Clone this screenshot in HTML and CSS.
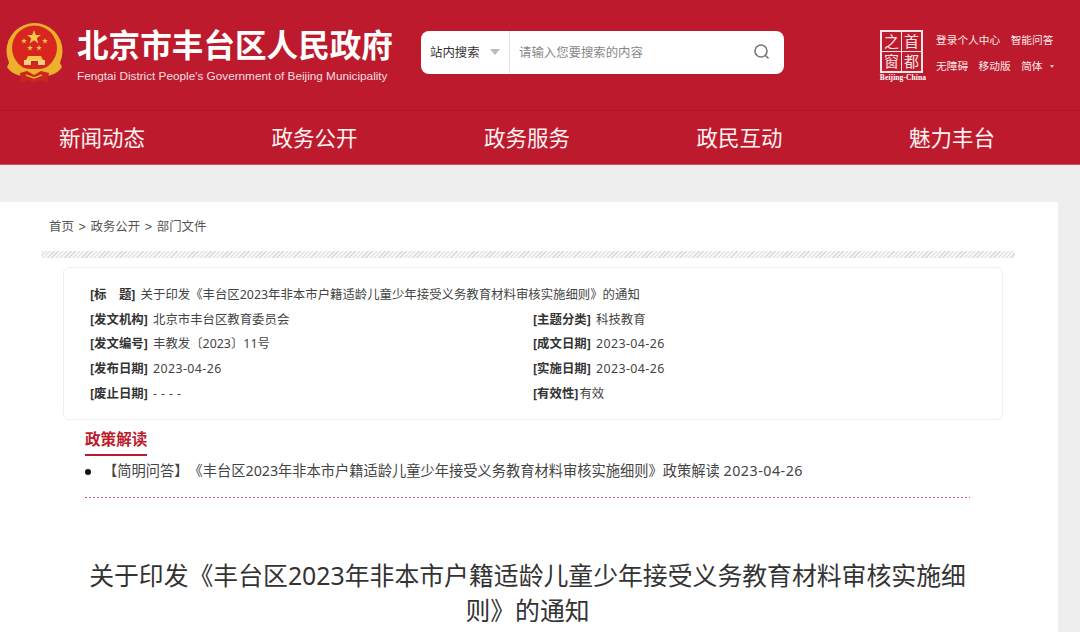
FILE: index.html
```html
<!DOCTYPE html>
<html>
<head>
    <meta charset="UTF-8">
    <title>北京市丰台区人民政府</title>
    <link rel="stylesheet" href="styles.css">
</head>
<body>
    <div class="header">
        <div class="logo">
            <svg class="emblem" width="58" height="62" viewBox="0 0 58 62">
                <defs>
                    <polygon id="star" points="0,-3 0.700,-1 2.900,-0.900 1.100,0.400 1.800,2.400 0,1.200 -1.800,2.400 -1.100,0.400 -2.900,-0.900 -0.700,-1"/>
                </defs>
                <circle cx="28.500" cy="28" r="28" fill="#ecb02c"/>
                <circle cx="28.500" cy="25" r="22.500" fill="#d8261f"/>
                <polygon points="28,7 29.800,12 35,12 30.800,15.200 32.400,20.500 28,17.300 23.600,20.500 25.200,15.200 21,12 26.200,12" fill="#f4c84a"/>
                <use href="#star" x="18" y="18" fill="#f4c84a"/>
                <use href="#star" x="39" y="18" fill="#f4c84a"/>
                <use href="#star" x="24" y="25" fill="#f4c84a"/>
                <use href="#star" x="33" y="25" fill="#f4c84a"/>
                <path d="M22 33h13l2 4H20z" fill="#f4c84a"/>
                <path d="M18 37h21v5H18z" fill="#f0d080"/>
                <path d="M25 38h7v4h-7z" fill="#c9271d"/>
                <path d="M4 38c6 7 14 8 24.500 8S47 45 53 38l3 6c-5 8-15 10-27.500 10S6 52 1 44z" fill="#ecb02c"/>
                <path d="M14 50l7-2 7 4 7-4 8 2-2 10-6-3-7 3-7-3-6 3z" fill="#c9271d"/>
                <path d="M20 52l8 3 8-3" stroke="#ecb02c" stroke-width="1.500" fill="none"/>
            </svg>
            <div class="logo-text">
                <div class="site-name">北京市丰台区人民政府</div>
                <div class="site-en">Fengtai District People's Government of Beijing Municipality</div>
            </div>
        </div>
        <div class="search">
            <div class="search-type">站内搜索<span class="caret"></span></div>
            <div class="search-input">请输入您要搜索的内容</div>
            <svg class="search-icon" width="18" height="18" viewBox="0 0 18 18" fill="none" stroke="#777" stroke-width="1.600">
                <circle cx="8" cy="8" r="6"/>
                <path d="M12.500 12.500L15.500 15.500"/>
            </svg>
        </div>
        <div class="header-right">
            <div class="capital">
                <div class="seal">
                    <span>之</span><span>首</span><span>窗</span><span>都</span>
                </div>
                <div class="seal-en">Beijing-China</div>
            </div>
            <div class="links">
                <div class="link-row"><span>登录个人中心</span><span>智能问答</span></div>
                <div class="link-row"><span>无障碍</span><span>移动版</span><span>简体<i class="mini-caret"></i></span></div>
            </div>
        </div>
    </div>

    <div class="nav">
        <span>新闻动态</span>
        <span>政务公开</span>
        <span>政务服务</span>
        <span>政民互动</span>
        <span>魅力丰台</span>
    </div>

    <div class="content">
        <div class="crumbs">首页 &gt; 政务公开 &gt; 部门文件</div>
        <div class="hatch"></div>

        <div class="meta">
            <div class="meta-row meta-full"><b>[标　题]</b> 关于印发《丰台区2023年非本市户籍适龄儿童少年接受义务教育材料审核实施细则》的通知</div>
            <div class="meta-row"><b>[发文机构]</b> 北京市丰台区教育委员会</div>
            <div class="meta-row"><b>[主题分类]</b> 科技教育</div>
            <div class="meta-row"><b>[发文编号]</b> 丰教发〔2023〕11号</div>
            <div class="meta-row"><b>[成文日期]</b> <span class="num">2023-04-26</span></div>
            <div class="meta-row"><b>[发布日期]</b> <span class="num">2023-04-26</span></div>
            <div class="meta-row"><b>[实施日期]</b> <span class="num">2023-04-26</span></div>
            <div class="meta-row"><b>[废止日期]</b> <span class="num">- - - -</span></div>
            <div class="meta-row"><b class="tight">[有效性]</b>有效</div>
        </div>

        <div class="policy">
            <h3>政策解读</h3>
            <ul>
                <li>【简明问答】《丰台区2023年非本市户籍适龄儿童少年接受义务教育材料审核实施细则》政策解读 <span class="num">2023-04-26</span></li>
            </ul>
        </div>
        <div class="rule"></div>

        <h1 class="doc-title">关于印发《丰台区2023年非本市户籍适龄儿童少年接受义务教育材料审核实施细则》的通知</h1>
    </div>
</body>
</html>
```

FILE: styles.css
```css
* {
    margin: 0;
    padding: 0;
    box-sizing: border-box;
    font-family: "Liberation Sans", "Noto Sans CJK SC", sans-serif;
}

html, body {
    height: 632px;
    overflow: hidden;
}

body {
    background: #eeeeee;
}

.header {
    background: #bd1b2d;
    height: 110px;
    display: flex;
    align-items: flex-start;
    color: white;
}

.logo {
    width: 421px;
    display: flex;
    padding: 23px 0 0 6px;
}

.emblem {
    flex: none;
    margin-right: 13px;
}

.logo-text {
    padding-top: 4px;
}

.site-name {
    font-size: 31.600px;
    line-height: 38px;
    font-weight: bold;
    white-space: nowrap;
}

.site-en {
    font-size: 11.750px;
    line-height: 16px;
    margin-top: 3px;
    white-space: nowrap;
    color: #f6dfe2;
}

.search {
    margin-top: 31px;
    width: 363px;
    height: 43px;
    background: white;
    border-radius: 8px;
    display: flex;
    align-items: center;
    font-size: 12.400px;
    padding-bottom: 1px;
}

.search-type {
    width: 89px;
    height: 100%;
    border-right: 1px solid #e8e0e0;
    display: flex;
    align-items: center;
    padding-left: 9px;
    color: #333;
}

.caret {
    margin-left: 10px;
    border-left: 5.500px solid transparent;
    border-right: 5.500px solid transparent;
    border-top: 6px solid #bbbbbb;
}

.search-input {
    flex: 1;
    padding-left: 9px;
    color: #888;
}

.search-icon {
    margin-right: 13px;
}

.header-right {
    display: flex;
    margin-left: 95px;
    padding-top: 30px;
}

.capital {
    width: 48px;
    margin-right: 9px;
}

.seal {
    width: 43px;
    height: 43px;
    margin-left: 1px;
    border: 2px solid #f6e6e6;
    display: grid;
    grid-template-columns: 1fr 1fr;
    grid-template-rows: 1fr 1fr;
    gap: 1px;
    background: #f6e6e6;
}

.seal span {
    background: #bd1b2d;
    font-size: 15px;
    line-height: 19px;
    text-align: center;
    overflow: hidden;
    color: #f8e2e2;
}

.seal-en {
    font-family: "Liberation Serif", serif;
    font-size: 7.500px;
    line-height: 9px;
    font-weight: bold;
    white-space: nowrap;
    text-align: center;
    letter-spacing: 0.100px;
}

.links {
    font-size: 10.700px;
    color: #fbeaea;
}

.link-row {
    display: flex;
    gap: 10.500px;
    line-height: 14px;
    margin-bottom: 9px;
    padding-top: 3px;
    white-space: nowrap;
}

.link-row span {
    display: flex;
    align-items: center;
}

.mini-caret {
    margin-left: 7px;
    border-left: 2px solid transparent;
    border-right: 2px solid transparent;
    border-top: 3px solid #f0c8c8;
}

.nav {
    background: #bd1b2d;
    border-top: 1px solid #b01828;
    border-bottom: 1px solid #c9505d;
    height: 55px;
    padding-top: 1px;
    display: grid;
    grid-template-columns: repeat(5, 204px);
    column-gap: 8.500px;
    color: #fdf2f2;
    font-size: 21.500px;
    line-height: 54px;
    text-align: center;
}

.content {
    background: white;
    width: 1058px;
    margin-top: 37px;
    height: 430px;
    overflow: hidden;
}

.crumbs {
    font-size: 12.400px;
    line-height: 16px;
    color: #555;
    padding: 17px 0 0 49px;
    word-spacing: 1.300px;
}

.hatch {
    margin: 16px 0 0 41px;
    width: 974px;
    height: 7px;
    background: repeating-linear-gradient(135deg, #dcdcdc 0, #dcdcdc 1px, #f6f6f6 1px, #f6f6f6 3px);
}

.meta {
    margin: 9px 0 0 63px;
    width: 940px;
    height: 153px;
    border: 1px solid #eeeeee;
    border-radius: 6px;
    padding: 14px 0 0 26px;
    display: grid;
    grid-template-columns: 443px 1fr;
    grid-auto-rows: 24.700px;
    font-family: "Noto Sans", "Noto Sans CJK SC", sans-serif;
    font-size: 12.400px;
    line-height: 25px;
    color: #444;
}

.meta b {
    font-family: inherit;
    color: #333;
    margin-right: 2px;
}

.meta b.tight {
    margin-right: 1px;
}

.meta-row {
    font-family: inherit;
}

.meta-full {
    grid-column: 1 / 3;
}

.num {
    font-family: "Noto Sans", sans-serif;
    letter-spacing: 0.400px;
}

.policy {
    margin: 6px 0 0 85px;
    width: 885px;
    height: 71px;
}

.policy h3 {
    display: inline-block;
    font-size: 15.600px;
    line-height: 28px;
    color: #bd1b2d;
    border-bottom: 2px solid #bd1b2d;
}

.policy ul {
    list-style: none;
    margin-top: 3px;
}

.policy li {
    position: relative;
    padding-left: 18px;
    font-family: "Noto Sans", "Noto Sans CJK SC", sans-serif;
    font-size: 14.250px;
    line-height: 24px;
    color: #444;
    text-spacing-trim: space-all;
}

.policy li .num {
    letter-spacing: 0.500px;
}

.policy li::before {
    content: "";
    position: absolute;
    left: 0;
    top: 10px;
    width: 6px;
    height: 6px;
    border-radius: 50%;
    background: #111;
}

.rule {
    margin-left: 85px;
    width: 885px;
    height: 1px;
    background: repeating-linear-gradient(90deg, #c9606c 0, #c9606c 2px, transparent 2px, transparent 4px);
}

.doc-title {
    margin: 60px 0 0 85px;
    width: 885px;
    font-family: "Noto Sans", "Noto Sans CJK SC", sans-serif;
    font-size: 24.850px;
    font-weight: normal;
    line-height: 35px;
    text-align: center;
    color: #333;
}
```
